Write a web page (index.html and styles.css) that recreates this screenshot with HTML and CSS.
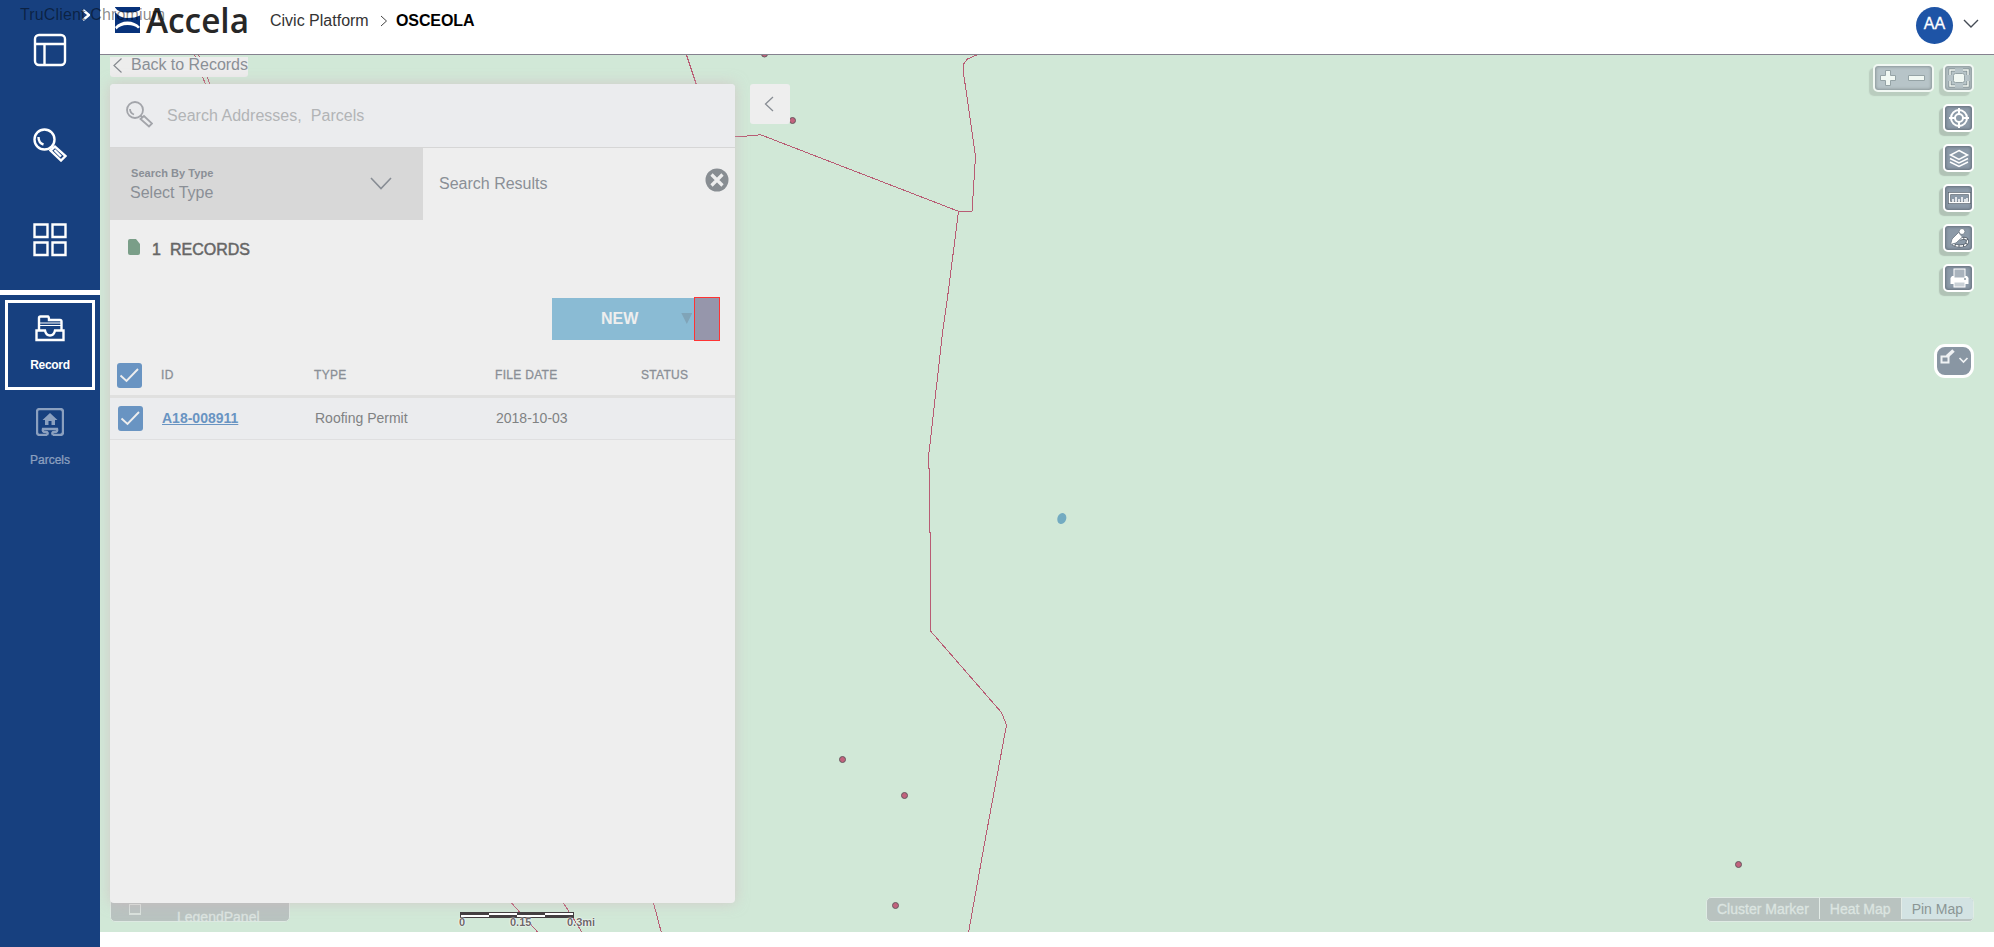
FILE: index.html
```html
<!DOCTYPE html>
<html lang="en">
<head>
<meta charset="utf-8">
<title>Civic Platform</title>
<link rel="stylesheet" href="styles.css">
</head>
<body>
<div class="app">
  <nav class="sidebar">
    <svg class="expand" width="8" height="12" viewBox="0 0 8 12"><path d="M1 1l6 5-6 5"/></svg>
    <a class="nav-item"><svg width="34" height="34" viewBox="0 0 34 34"><rect x="2" y="2" width="30" height="30" rx="4"/><path d="M2 11h30M11.500 11v21"/></svg></a>
    <a class="nav-item"><svg width="34" height="34" viewBox="0 0 34 34"><circle cx="11.500" cy="11.500" r="10"/><path d="M5.500 9q0 6 5 7.500M18 18l2.500 2.500M17.500 22.500l4.500-4 10.500 9.500-4.500 4.500zM21.500 22l6.500 6.500" /></svg></a>
    <a class="nav-item"><svg width="34" height="34" viewBox="0 0 34 34"><path d="M1.500 1.500h13v12.500h-13zM19.500 1.500h13v12.500h-13zM1.500 19.500h13v12.500h-13zM19.500 19.500h13v12.500h-13z"/></svg></a>
    <div class="nav-rule"></div>
    <a class="nav-tab active">
      <svg width="30" height="28" viewBox="0 0 30 28"><path d="M4 15V3q0-1.500 1.500-1.500h7.500q1 0 1 3.500H25q1.500 0 1.500 1.500V15M1.500 15.500h8.500q1 5 5 5t5-5h8.500v9.500h-27z"/><path class="fine" d="M4 8h22M4 10.500h22"/></svg>
      <span>Record</span>
    </a>
    <a class="nav-tab muted">
      <svg width="28" height="28" viewBox="0 0 28 28"><path d="M11 27H4q-3 0-3-3V4q0-3 3-3h20q3 0 3 3v20q0 3-3 3h-7"/><path class="solid" d="M14 5l7.500 7H19v5h-3.500v-4h-3v4H9v-5H6.500z"/><path d="M11 27q2-3-1.500-3Q6 24 7 21h14q1 3-2.500 3-3.500 0-1.500 3"/></svg>
      <span>Parcels</span>
    </a>
  </nav>

  <div class="main">
    <header class="header">
      <svg class="logo" width="134" height="30" viewBox="0 0 134 30">
        <rect y="2" width="25" height="26" fill="#07327b"/>
        <path d="M0 2.500q3 5 12.500 5T25 5v5.500q-5 2.500-12.500 2.500T0 7zM0 22q5-5.500 12.500-5.500T25 22l-2 1.500q-3-3.500-10.500-3.500T1.500 24.500z" fill="#fff"/>
        <text x="31" y="28" textLength="103" lengthAdjust="spacingAndGlyphs">Accela</text>
      </svg>
      <div class="crumbs">
        <span>Civic Platform</span>
        <svg width="8" height="12" viewBox="0 0 8 12"><path d="M1 1l5.500 5L1 11"/></svg>
        <b>OSCEOLA</b>
      </div>
      <div class="avatar">AA</div>
      <svg class="user-caret" width="16" height="10" viewBox="0 0 16 10"><path d="M1 1l7 7 7-7"/></svg>
    </header>

    <section class="map">
      <svg class="shapes" width="1894" height="877" viewBox="100 55 1894 877">
        <g class="bounds">
          <path d="M194.500 55l1 2M198.500 55l1 2M202.500 77l3 7M207 77l3 7M686.500 55l10 30M730 136.500h8l18-1 4-1L959 211.500h13l3.500-55L963.500 73v-9l4-5 9-4"/>
          <path d="M958.500 211.500L948.500 290 942.500 333 928.500 457v11h1v64h1v99L1001.500 712.500l5 12.500-21 113-17 94.500M511.500 903l27 30M563.500 903l19 30M653.500 903l8 30"/>
        </g>
        <g class="pins">
          <circle cx="764.500" cy="54" r="3"/><circle cx="792.500" cy="120.500" r="3"/><circle cx="842.500" cy="759.500" r="3"/><circle cx="904.500" cy="795.500" r="3"/><circle cx="895.500" cy="905.500" r="3"/><circle cx="1738.500" cy="864.500" r="3"/>
        </g>
        <ellipse cx="1061.800" cy="518.500" rx="4.400" ry="5.600" fill="#73abc1" transform="rotate(20 1061.800 518.500)"/>
      </svg>

      <div class="legend"><i></i><span>LegendPanel</span></div>

      <a class="back"><svg width="11" height="17" viewBox="0 0 11 17"><path d="M9.500 1.500L2 8.500l7.500 7"/></svg><span>Back to Records</span></a>

      <div class="panel">
        <div class="search">
          <svg width="27" height="27" viewBox="0 0 27 27"><circle cx="9" cy="9" r="8"/><path d="M4 8q0 4 4 5.500M14.500 14.500l1.500 1.500M14.500 18l3.500-3 8 7.500-3 3z"/></svg>
          <span>Search Addresses,&nbsp; Parcels</span>
        </div>
        <div class="tabs">
          <div class="type">
            <div class="type-text"><small>Search By Type</small><span>Select Type</span></div>
            <svg width="22" height="13" viewBox="0 0 22 13"><path d="M1 1l10 10.500L21 1"/></svg>
          </div>
          <div class="results">
            <span>Search Results</span>
            <svg width="24" height="24" viewBox="0 0 24 24"><circle cx="12" cy="12" r="11.500"/><path d="M6.500 6.500l11 11M17.500 6.500l-11 11"/></svg>
          </div>
        </div>
        <div class="count">
          <svg width="12" height="16" viewBox="0 0 12 16"><path d="M2 0h6l4 5v9q0 2-2 2H2q-2 0-2-2V2q0-2 2-2z"/></svg>
          <span>1</span><span>RECORDS</span>
        </div>
        <div class="actions"><div class="new"><span>NEW</span><i class="tri"></i><i class="marker"></i></div></div>
        <div class="row head">
          <svg class="check" width="25" height="25" viewBox="0 0 25 25"><path d="M3.500 12.500l6 5.500L21 6"/></svg>
          <span>ID</span><span>TYPE</span><span>FILE DATE</span><span>STATUS</span>
        </div>
        <div class="row item">
          <svg class="check" width="25" height="25" viewBox="0 0 25 25"><path d="M3.500 12.500l6 5.500L21 6"/></svg>
          <a>A18-008911</a><span>Roofing Permit</span><span>2018-10-03</span><span></span>
        </div>
      </div>

      <a class="collapse"><svg width="10" height="16" viewBox="0 0 10 16"><path d="M9 1L1.500 8 9 15"/></svg></a>

      <div class="scale">
        <div class="bar"><i></i><i></i><i></i><i></i></div>
        <div class="ticks"><span>0</span><span>0.15</span><span>0.3mi</span></div>
      </div>

      <div class="zoom-box tool faded">
        <svg width="56" height="24" viewBox="0 0 56 24"><path class="glyph" d="M10.500 4.500h5v5h5v5h-5v5h-5v-5h-5v-5h5zM33.500 9.500h16v5h-16z"/></svg>
      </div>
      <div class="tools">
        <div class="tool faded"><svg width="26" height="24" viewBox="0 0 26 24"><path class="dark" d="M4 9V4h5M17 4h5v5M22 15v5h-5M9 20H4v-5"/><path class="line" d="M4 9V4h5M17 4h5v5M22 15v5h-5M9 20H4v-5"/><rect class="glyph" x="7.500" y="7.500" width="11" height="9" rx="2"/></svg></div>
        <div class="tool"><svg width="26" height="24" viewBox="0 0 26 24"><g class="line bold"><circle cx="13" cy="12" r="8"/><circle cx="13" cy="12" r="4"/><path d="M13 2v6M13 16v6M3 12h6M17 12h6"/></g></svg></div>
        <div class="tool"><svg width="26" height="24" viewBox="0 0 26 24"><g class="line"><path d="M13 4.500l8.500 4.500-8.500 4.500L4.500 9zM4 12.500l9 4.500 9-4.500M4 16l9 4.500 9-4.500"/></g></svg></div>
        <div class="tool"><svg width="26" height="24" viewBox="0 0 26 24"><path class="dark" d="M3.500 7.500h20v9h-20z"/><g class="line"><path d="M3.500 7.500h20v9h-20zM7 16v-3M10 16v-5M13 16v-3M16 16v-5M19 16v-3M21 16v-4"/></g></svg></div>
        <div class="tool"><svg width="26" height="24" viewBox="0 0 26 24"><path class="dark" d="M14 13q7-2 7.500 2 0 5-7.500 5-5 0-7-2"/><path class="loop" d="M14 13q7-2 7.500 2 0 5-7.500 5-5 0-7-2"/><path class="glyph" d="M4.500 18.500L6 13l6.500-6.500 4 4.500L10 17z"/><circle class="glyph" cx="16" cy="5.500" r="3"/></svg></div>
        <div class="tool"><svg width="26" height="24" viewBox="0 0 26 24"><rect x="8" y="3" width="11" height="9" fill="#a9b3bd" stroke="#fff"/><path d="M6 10h2v2h11v-2h2l1.500 2v6H4.500v-6z" fill="#fff"/><rect x="8" y="16" width="11" height="5" fill="#c9d0d6" stroke="#fff"/><circle cx="19" cy="13" r="1" fill="#8996a1"/></svg></div>
      </div>
      <div class="draw-tool"><svg width="34" height="28" viewBox="0 0 34 28"><path d="M4.500 9.500h7v6h-7z" stroke-width="2"/><path d="M10 9.500l6.500-6" stroke-width="3.500"/><path d="M22.500 11l4 4 4-4" stroke-width="1.700"/></svg></div>

      <div class="modes"><span>Cluster Marker</span><span>Heat Map</span><span class="on">Pin Map</span></div>
    </section>
  </div>
  <div class="overlay-title">TruClient Chromium</div>
</div>
</body>
</html>
```
FILE: styles.css
```css
* { box-sizing: border-box; }
body {
  margin: 0;
  background: #fff;
  font-family: "Liberation Sans", Arial, sans-serif;
  font-size: 16px;
}
svg { display: block; fill: none; flex: none; }
.app { position: relative; display: flex; width: 1994px; height: 947px; overflow: hidden; }
.overlay-title { position: absolute; left: 20px; top: 6px; color: rgba(0, 0, 0, .48); line-height: 18px; white-space: nowrap; letter-spacing: .15px; }

/* Sidebar */
.sidebar { width: 100px; background: #17407f; flex: none; display: flex; flex-direction: column; align-items: center; }
.sidebar svg { stroke: #fff; stroke-width: 2.4; }
.sidebar svg .fine { stroke-width: 1.2; }
.expand { margin: 9px 0 1px 72px; height: 12px; }
.nav-item { height: 95px; padding-top: 11px; }
.nav-item:last-of-type { height: 78px; }
.nav-rule { width: 100px; height: 5px; background: #fff; margin-top: -17px; flex: none; }
.nav-tab {
  width: 90px; height: 90px; margin-top: 5px; border: 3px solid transparent;
  display: flex; flex-direction: column; align-items: center;
  padding-top: 12px; font-size: 12px; color: #fff;
}
.nav-tab svg { height: 28px; }
.nav-tab span { margin-top: 15px; line-height: 14px; }
.nav-tab.active { border-color: #fff; }
.nav-tab.active span { font-weight: bold; letter-spacing: -.3px; }
.nav-tab.muted { opacity: .5; padding-top: 10px; margin-top: 5px; }
.nav-tab.muted span { margin-top: 17px; -webkit-text-stroke: .2px #fff; }
.nav-tab.muted .solid { fill: #fff; stroke: none; }

/* Header */
.main { flex: 1; display: flex; flex-direction: column; }
.header { height: 55px; border-bottom: 1px solid #85828f; display: flex; padding: 5px 15px 0; }
.logo text { font: 600 34px "Open Sans", sans-serif; fill: #272727; }
.crumbs { display: flex; margin-left: 21px; line-height: 18px; padding-top: 7px; color: #333; }
.crumbs span { width: 110px; }
.crumbs svg { margin: 3px 8px 0 0; stroke: #444; }
.crumbs b { color: #000; letter-spacing: -.1px; }
.avatar { margin: 2px 0 0 auto; width: 37px; height: 37px; border-radius: 50%; background: #1e54a6; color: #fff; text-align: center; line-height: 33px; -webkit-text-stroke: .3px #fff; }
.user-caret { margin: 14px 0 0 10px; stroke: #444b55; stroke-width: 1.4; }

/* Map */
.map { position: relative; height: 877px; background: #d1e8d7; overflow: hidden; }
.bounds { stroke: #b85c74; stroke-width: 1; shape-rendering: crispEdges; }
.pins { fill: #c2627d; stroke: #66595f; stroke-width: 1; }
.back {
  position: absolute; left: 10px; top: 2px; width: 138px; height: 20px;
  background: #ededed; border-radius: 0 0 3px 3px; display: flex; color: #8a8f96; line-height: 15px;
}
.back svg { margin: 0 8px 0 2px; stroke: #85898f; stroke-width: 1.2; }
.back span { letter-spacing: -.03px; white-space: nowrap; }
.panel {
  position: absolute; left: 10px; top: 29px; width: 625px; height: 819px;
  background: #eee; border-radius: 4px; box-shadow: 0 0 14px rgba(210, 180, 190, .6); color: #8a8f96;
}
.search { height: 64px; display: flex; background: #ebecee; border-bottom: 1px solid #d6d6d6; border-radius: 4px 4px 0 0; padding: 17px 16px; color: #b2b4b6; }
.search svg { stroke: #a3a5aa; stroke-width: 1.8; }
.search span { margin: 6px 0 0 14px; line-height: 18px; letter-spacing: .03px; }
.tabs { display: flex; height: 72px; }
.type { width: 313px; background: #d8d8d8; display: flex; justify-content: space-between; padding: 0 31px 0 20px; }
.type-text { display: flex; flex-direction: column; padding-top: 19px; }
.type-text small { font-size: 11px; font-weight: bold; line-height: 13px; letter-spacing: .05px; padding-left: 1px; }
.type-text span { line-height: 18px; margin-top: 4px; }
.type svg { margin-top: 29px; stroke: #888d94; stroke-width: 1.6; }
.results { flex: 1; display: flex; justify-content: space-between; padding: 20px 6px 0 16px; }
.results span { line-height: 18px; margin-top: 7px; }
.results circle { fill: #888d92; }
.results path { stroke: #eee; stroke-width: 3.2; }
.count { display: flex; height: 78px; padding: 19px 18px 0; color: #666; line-height: 18px; }
.count svg { fill: #7a9e88; }
.count span { margin: 2px 0 0 12px; -webkit-text-stroke: .5px #666; }
.count span:last-child { margin-left: 9px; }
.actions { display: flex; justify-content: flex-end; padding-right: 16px; }
.new { width: 167px; height: 42px; background: #8abbd4; display: flex; position: relative; color: #eee; font-weight: bold; line-height: 42px; padding-left: 49px; }
.tri { margin: 15px 0 0 43px; width: 11px; height: 11px; background: #80a4b8; clip-path: polygon(0 0, 100% 0, 50% 100%); }
.marker { position: absolute; left: 142px; top: -1px; width: 26px; height: 44px; background: #9696ab; border: 1px solid #f33; }
.row { display: grid; grid-template-columns: 44px 153px 181px 146px 1fr; padding-left: 7px; }
.check { background: #6994c2; border-radius: 3px; stroke: #eee; stroke-width: 1.9; }
.head { height: 58px; padding-top: 23px; border-bottom: 3px solid #e0e0df; font-size: 12px; line-height: 24px; letter-spacing: .3px; -webkit-text-stroke: .3px #8a8f96; }
.item { height: 42px; padding: 8px 0 0 8px; background: #ebecee; border-bottom: 1px solid #dfdfe0; font-size: 14px; line-height: 24px; color: #808283; }
.item a { color: #6994c2; font-weight: bold; text-decoration: underline; }
.collapse { position: absolute; left: 650px; top: 29px; width: 40px; height: 40px; border-radius: 3px; background: #eee; padding: 12px 14px; }
.collapse svg { stroke: #888d94; stroke-width: 1.3; }

.legend {
  position: absolute; left: 10px; top: 840px; width: 180px; height: 27px; overflow: hidden;
  background: #b9c3c0; border: 1px solid #dde9e2; border-radius: 0 0 5px 5px; color: #dce4e0; font-size: 14px;
}
.legend i { display: block; width: 12px; height: 11px; border: 1px solid #d9e2dd; border-bottom-width: 2px; margin: 8px 0 0 18px; }
.legend span { display: block; margin: -6px 0 0 66px; line-height: 16px; -webkit-text-stroke: .3px; }
.scale { position: absolute; left: 360px; top: 857px; width: 145px; }
.bar { width: 114px; height: 6px; display: flex; background: #443f41; padding: 1px; }
.bar i { width: 28px; height: 2px; background: #fff; }
.bar i:nth-child(odd) { margin-top: 2px; }
.ticks { display: grid; grid-template-columns: 51px 57px 1fr; margin: -1px 0 0 -1px; font-size: 11px; font-weight: bold; line-height: 11px; color: #6d696a; }
.ticks span { text-shadow: 0 0 1px #fff, 0 0 1px #fff, 0 0 2px #fff; }

/* Map tools */
.tool {
  width: 31px; height: 28px; border: 2px solid #fff; border-radius: 5px; background: #8c9aa8;
  box-shadow: inset 0 0 3px 1px #66717e, -4px 4px 1px rgba(125, 135, 130, .38);
}
.tools .tool { padding-left: 1px; }
.tool .glyph { fill: #fff; stroke: #7c8792; }
.tool .line { stroke: #fff; stroke-width: 1.5; }
.tool .bold { stroke-width: 2; }
.tool .dark { stroke: #59636e; stroke-width: 3; }
.tool .loop { stroke: #fff; stroke-width: 1.4; stroke-dasharray: 3 1; }
.tool.faded { opacity: .7; background: #adb6c2; box-shadow: inset 0 0 3px 1px #6f7680, -4px 4px 1px rgba(125, 135, 130, .38); }
.zoom-box { position: absolute; left: 1773px; top: 9px; }
.zoom-box.tool { width: 61px; }
.tools { position: absolute; left: 1843px; top: 9px; display: flex; flex-direction: column; gap: 12px; }
.draw-tool { position: absolute; left: 1834px; top: 289px; width: 40px; height: 34px; border: 3px solid #fff; border-radius: 11px; background: #8996a3; }
.draw-tool svg { stroke: #f0f2f4; }
.modes {
  position: absolute; left: 1606px; top: 842px; width: 268px; height: 25px; overflow: hidden; display: flex;
  border: 1px solid #dfebe4; border-radius: 5px; background: #b9c3c0; color: #dce5e1; font-size: 14px; line-height: 23px;
}
.modes span { padding: 0 10px; height: 21px; border-right: 1px solid #e3ece7; white-space: nowrap; -webkit-text-stroke: .3px; }
.modes span:first-child { width: 113px; }
.modes span:nth-child(2) { width: 82px; }
.modes .on { flex: 1; background: #d3e3e3; color: #8b9695; border: 0; -webkit-text-stroke: 0; }
```
